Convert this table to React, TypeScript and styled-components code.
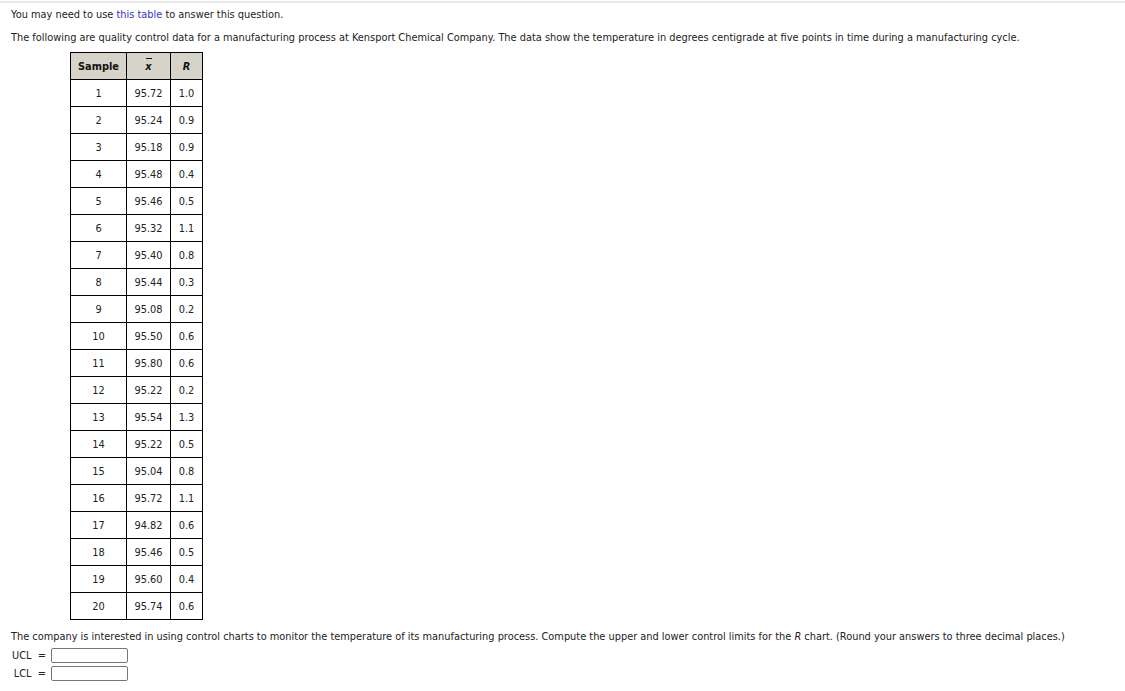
import React from "react";
import styled, { createGlobalStyle } from "styled-components";

const Global = createGlobalStyle`
  html, body { margin: 0; padding: 0; background: #fff; }
  body { font-family: Verdana, "DejaVu Sans", sans-serif; font-size: 9.8px; color: #222; }
`;

const Page = styled.div`
  margin-top: 1px;
  border-top: 2px solid #e8e8e8;
  padding: 5px 0 0 11px;
`;

const Para = styled.p<{ $mb: number }>`
  margin: 0 0 ${(p) => p.$mb}px 0;
  line-height: 13px;
`;

const Link = styled.a`
  color: #3333cc;
  text-decoration: none;
`;

const Table = styled.table`
  border-collapse: collapse;
  table-layout: fixed;
  margin: 0 0 0 59px;
  width: 132px;
`;

const Th = styled.th<{ $w: number }>`
  width: ${(p) => p.$w}px;
  height: 26px;
  padding: 0;
  border: 1px solid #000;
  background: #d6d3c9;
  font-weight: bold;
  font-size: 9.8px;
  text-align: center;
  color: #111;
`;

const Td = styled.td`
  height: 26px;
  padding: 0;
  border: 1px solid #000;
  text-align: center;
  font-size: 9.8px;
  color: #222;
`;

const XBar = styled.span`
  display: inline-block;
  position: relative;
  font-style: italic;
  &::before {
    content: "";
    position: absolute;
    left: 1px;
    right: 0;
    top: -3px;
    height: 1px;
    background: #111;
  }
`;

const Ital = styled.i``;

const Bottom = styled.div`
  margin-top: 11px;
`;

const AnswerGrid = styled.div`
  display: grid;
  grid-template-columns: 34px auto;
  column-gap: 5px;
  row-gap: 3px;
  margin-top: 6px;
  margin-left: 1px;
  align-items: center;
`;

const Label = styled.span`
  text-align: right;
  white-space: pre;
  line-height: 15px;
`;

const Input = styled.input`
  box-sizing: border-box;
  width: 77px;
  height: 15px;
  border: 1px solid #767676;
  border-radius: 2px;
  padding: 0;
  margin: 0;
  font-size: 10px;
`;

const data: [number, string, string][] = [
  [1, "95.72", "1.0"],
  [2, "95.24", "0.9"],
  [3, "95.18", "0.9"],
  [4, "95.48", "0.4"],
  [5, "95.46", "0.5"],
  [6, "95.32", "1.1"],
  [7, "95.40", "0.8"],
  [8, "95.44", "0.3"],
  [9, "95.08", "0.2"],
  [10, "95.50", "0.6"],
  [11, "95.80", "0.6"],
  [12, "95.22", "0.2"],
  [13, "95.54", "1.3"],
  [14, "95.22", "0.5"],
  [15, "95.04", "0.8"],
  [16, "95.72", "1.1"],
  [17, "94.82", "0.6"],
  [18, "95.46", "0.5"],
  [19, "95.60", "0.4"],
  [20, "95.74", "0.6"],
];

export default function App() {
  return (
    <>
      <Global />
      <Page>
        <Para $mb={10}>
          You may need to use <Link href="#">this table</Link> to answer this question.
        </Para>
        <Para $mb={8}>
          The following are quality control data for a manufacturing process at Kensport Chemical Company. The data show the temperature in degrees centigrade at five points in time during a manufacturing cycle.
        </Para>
        <Table>
          <thead>
            <tr>
              <Th $w={55}>Sample</Th>
              <Th $w={43}>
                <XBar>x</XBar>
              </Th>
              <Th $w={31}>
                <Ital>R</Ital>
              </Th>
            </tr>
          </thead>
          <tbody>
            {data.map(([s, x, r]) => (
              <tr key={s}>
                <Td>{s}</Td>
                <Td>{x}</Td>
                <Td>{r}</Td>
              </tr>
            ))}
          </tbody>
        </Table>
        <Bottom>
          The company is interested in using control charts to monitor the temperature of its manufacturing process. Compute the upper and lower control limits for the <Ital>R</Ital> chart. (Round your answers to three decimal places.)
        </Bottom>
        <AnswerGrid>
          <Label>{"UCL  ="}</Label>
          <Input type="text" />
          <Label>{"LCL  ="}</Label>
          <Input type="text" />
        </AnswerGrid>
      </Page>
    </>
  );
}
